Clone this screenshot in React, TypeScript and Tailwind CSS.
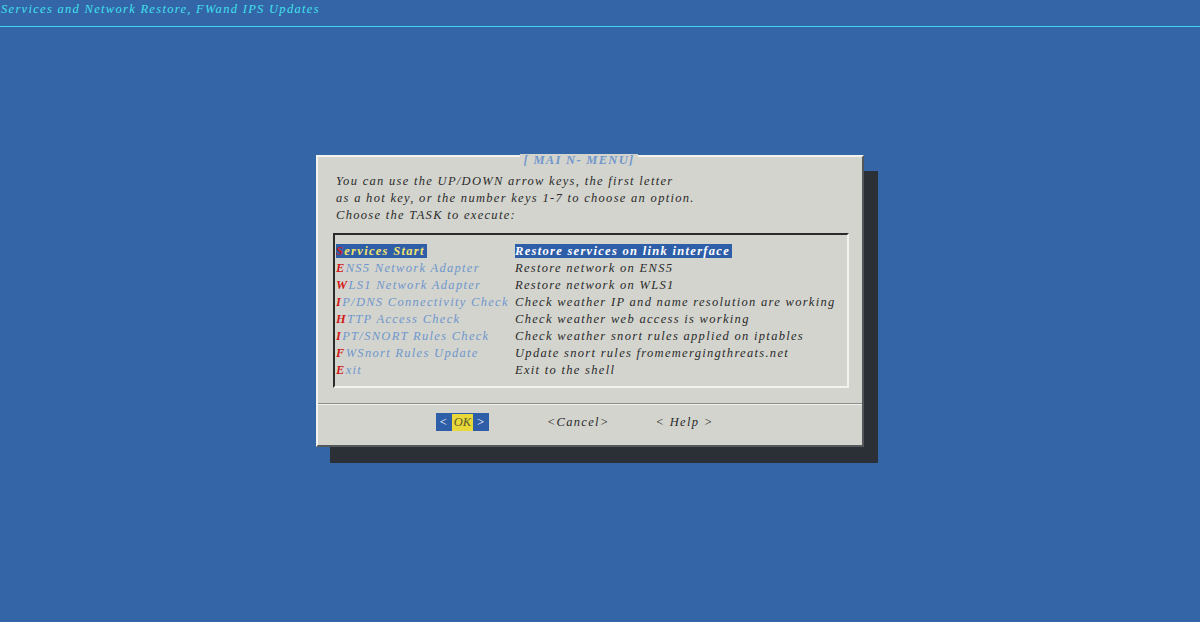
const F = { fontFamily: '"Liberation Serif", "DejaVu Serif", serif', fontStyle: 'italic', letterSpacing: '1.3px' } as const;

const items: [string, string, string][] = [
  ['S', 'ervices Start', 'Restore services on link interface'],
  ['E', 'NS5 Network Adapter', 'Restore network on ENS5'],
  ['W', 'LS1 Network Adapter', 'Restore network on WLS1'],
  ['I', 'P/DNS Connectivity Check', 'Check weather IP and name resolution are working'],
  ['H', 'TTP Access Check', 'Check weather web access is working'],
  ['I', 'PT/SNORT Rules Check', 'Check weather snort rules applied on iptables'],
  ['F', 'WSnort Rules Update', 'Update snort rules fromemergingthreats.net'],
  ['E', 'xit', 'Exit to the shell'],
];

export default function App() {
  return (
    <div className="w-[1200px] h-[622px] bg-[#3465a7] overflow-hidden text-[12.5px]" style={F}>
      <div className="h-[19px] pl-[1px] pt-[1px] text-[#40e0f0] leading-[17px]">Services and Network Restore, FWand IPS Updates</div>
      <div className="mt-[7px] h-px bg-[#3ad6ee]" />
      <div className="ml-[316px] mt-[128px] w-[548px] h-[292px] bg-[#d3d4ce] border-t-2 border-l-2 border-[#f2f2ee] border-r-2 border-b-2 border-r-[#55585a] border-b-[#55585a] shadow-[14px_16px_0_#2b3036] relative flex flex-col">
        <div className="absolute left-0 right-0 -top-[3px] flex justify-center">
          <span className="bg-[#d3d4ce] px-1 text-[#6f96cc] font-bold leading-[13px] ml-[-22px] whitespace-nowrap">[ MAI N- MENU]</span>
        </div>
        <div className="pl-[18px] pt-[16px] text-[#2a2a2a] leading-[17px]">
          <div>You can use the UP/DOWN arrow keys, the first letter</div>
          <div>as a hot key, or the number keys 1-7 to choose an option.</div>
          <div>Choose the TASK to execute:</div>
        </div>
        <div className="ml-[15px] mt-[9px] w-[516px] h-[155px] border-t-2 border-l-2 border-[#2a2a2a] border-r-2 border-b-2 border-r-[#f2f2ee] border-b-[#f2f2ee] pt-[8px] leading-[17px]">
          {items.map(([k, rest, desc], i) => (
            <div key={i} className="flex h-[17px] whitespace-nowrap">
              <div className="w-[180px] shrink-0 pl-[1px]">
                <span className={i === 0 ? 'bg-[#2f5ea8] pr-[2px]' : ''}>
                  <span className="text-[#d21a1a] font-bold">{k}</span>
                  <span className={i === 0 ? 'text-[#f2e46a] font-semibold' : 'text-[#6f96cc]'}>{rest}</span>
                </span>
              </div>
              <div>
                <span className={i === 0 ? 'bg-[#2f5ea8] text-white font-bold pr-[2px]' : 'text-[#2a2a2a]'}>{desc}</span>
              </div>
            </div>
          ))}
        </div>
        <div className="mt-[15px] h-[2px] bg-[#f2f2ee] border-t border-[#8a8c8a]" />
        <div className="flex items-center pl-[118px] mt-[8px] text-[#2a2a2a] leading-[17px] whitespace-nowrap">
          <span className="bg-[#2f5ea8] text-white flex h-[18px] items-center">
            <span className="px-[3px]">&lt;</span>
            <span className="bg-[#e8d83a] text-[#5a5a2a] px-[2px]" style={{ letterSpacing: 0 }}>OK</span>
            <span className="px-[3px]">&gt;</span>
          </span>
          <span className="ml-[58px]">&lt;Cancel&gt;</span>
          <span className="ml-[46px]">&lt; Help &gt;</span>
        </div>
      </div>
    </div>
  );
}
